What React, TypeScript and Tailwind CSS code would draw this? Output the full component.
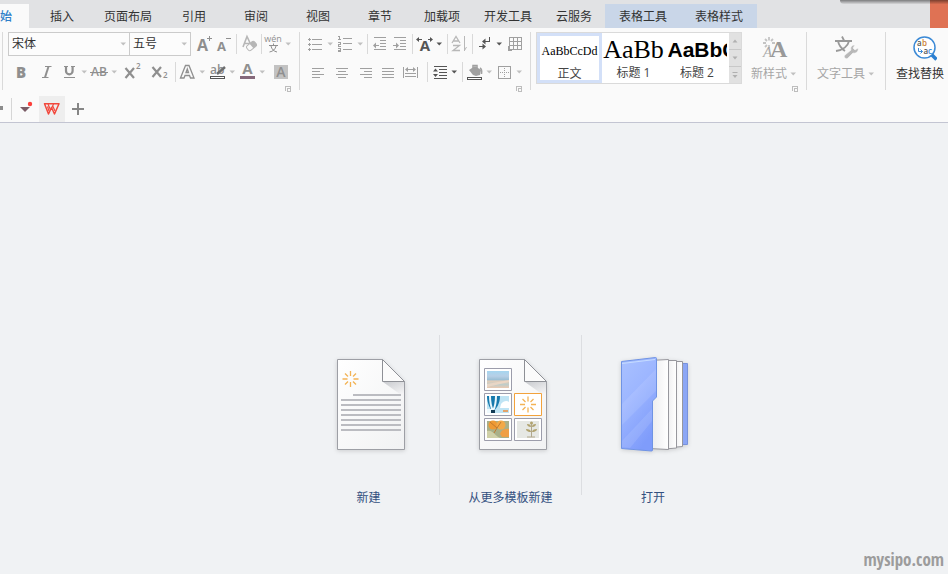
import { useState } from "react";
import type { ReactNode } from "react";

const tabs = ["插入", "页面布局", "引用", "审阅", "视图", "章节", "加载项", "开发工具", "云服务"];
const contextTabs = ["表格工具", "表格样式"];

/* ---------- small ribbon parts ---------- */

function Svg({ w = 22, h = 20, children }: { w?: number; h?: number; children: ReactNode }) {
  return (
    <svg
      width={w}
      height={h}
      viewBox={`0 0 ${w} ${h}`}
      fill="none"
      stroke="currentColor"
      className="shrink-0 overflow-visible"
      aria-hidden="true"
    >
      {children}
    </svg>
  );
}

function Tool({ label, className = "w-[22px]", children }: { label: string; className?: string; children: ReactNode }) {
  return (
    <button aria-label={label} className={`flex h-6 shrink-0 items-center justify-center ${className}`}>
      {children}
    </button>
  );
}

function Caret({ className = "text-[#c0c0c0]" }: { className?: string }) {
  return (
    <svg width="8" height="4" viewBox="0 0 8 4" className={`shrink-0 ${className}`} aria-hidden="true">
      <path d="M1.500 0.500h5.500L4.250 3.500z" fill="currentColor" />
    </svg>
  );
}

function Sep({ className = "" }: { className?: string }) {
  return <span className={`h-5 w-px shrink-0 bg-[#d9d9d9] ${className}`} />;
}

function Launcher() {
  return (
    <button aria-label="更多设置" className="mt-0.5 mr-2 self-end text-[#bdbdbd]">
      <svg width="6" height="6" viewBox="0 0 6 6" fill="none" stroke="currentColor" shapeRendering="crispEdges">
        <path d="M.5 5V.5H5.500M5.500 .5V2M2.500 2.500h3v3h-3z" />
      </svg>
    </button>
  );
}

function Picker({ label, options, className }: { label: string; options: string[]; className: string }) {
  return (
    <label className={`grid h-6 shrink-0 items-center border border-[#cbcbcb] bg-[#fcfcfc] ${className}`}>
      <select
        aria-label={label}
        className="col-start-1 row-start-1 h-[22px] w-full appearance-none bg-transparent pl-[3px] text-[12px] leading-[22px] text-[#333] outline-none"
      >
        {options.map((o) => (
          <option key={o}>{o}</option>
        ))}
      </select>
      <span className="pointer-events-none col-start-1 row-start-1 mr-0.5 justify-self-end">
        <Caret />
      </span>
    </label>
  );
}

/* ---------- ribbon groups ---------- */

function FontGroup() {
  return (
    <div className="ml-0.5 flex h-[58px] w-[297px] shrink-0 flex-col border-l border-[#dadada] pl-[5px] text-[#8f8f8f]">
      <div className="flex items-center">
        <Picker label="字体" options={["宋体", "黑体", "楷体"]} className="w-[122px]" />
        <Picker label="字号" options={["五号", "四号", "三号"]} className="-ml-px w-[62px]" />
        <Tool label="增大字号" className="w-6">
          <Svg w={24}>
            <text x="6" y="17" fontSize="16" fontWeight="700" fill="currentColor" stroke="none">A</text>
            <path d="M16 4.500h5M18.500 2v5" />
          </Svg>
        </Tool>
        <Tool label="减小字号" className="w-5">
          <Svg w={20}>
            <text x="2" y="17" fontSize="13" fontWeight="700" fill="currentColor" stroke="none">A</text>
            <path d="M11 4.500h5" />
          </Svg>
        </Tool>
        <Sep className="ml-px" />
        <Tool label="清除格式" className="w-6 text-[#b6b6b6]">
          <Svg w={24}>
            <path d="M6 13L10 2.500L14 11M7.500 9.500h5" strokeWidth="1.600" />
            <g transform="rotate(-40 14.500 12)">
              <rect x="9.500" y="9" width="10" height="6" rx="2" fill="#fafafa" />
              <path d="M14.500 9h3a2 2 0 0 1 2 2v2a2 2 0 0 1-2 2h-3z" fill="currentColor" stroke="none" />
            </g>
          </Svg>
        </Tool>
        <Sep />
        <Tool label="拼音指南">
          <Svg w={22}>
            <text x="11" y="8" textAnchor="middle" fontSize="9" fill="currentColor" stroke="none">wén</text>
            <path d="M7 11.500h9M11.500 9.500v2M9 12c.5 3 3 5.500 6 6M14 12c-.5 3-3 5.500-6.500 6" />
          </Svg>
        </Tool>
        <Caret />
      </div>

      <div className="mt-1 flex items-center">
        <Tool label="加粗" className="w-[26px]">
          <span className="text-[15px] leading-5 font-extrabold">B</span>
        </Tool>
        <Tool label="倾斜" className="w-[26px]">
          <Svg w={22}>
            <path d="M9 4.500h6.500M6 15.500h6.500" />
            <path d="M12.500 4.500l-3.500 11" strokeWidth="2" />
          </Svg>
        </Tool>
        <Tool label="下划线" className="w-5">
          <Svg w={20}>
            <path d="M6 4v5a3.300 3.300 0 0 0 6.600 0V4" strokeWidth="2.200" />
            <path d="M4 4.500h4M11 4.500h4M4 15.500h11" />
          </Svg>
        </Tool>
        <Caret />
        <Tool label="删除线">
          <Svg w={22}>
            <text x="11" y="14" textAnchor="middle" fontSize="12" fontWeight="600" fill="currentColor" stroke="none">AB</text>
            <path d="M2 10.500h18" />
          </Svg>
        </Tool>
        <Caret />
        <Tool label="上标" className="w-7">
          <Svg w={28}>
            <path d="M7.500 6l8.500 10M16 6L7.500 16" strokeWidth="2.200" />
            <text x="18" y="7" fontSize="8" fontWeight="600" fill="currentColor" stroke="none">2</text>
          </Svg>
        </Tool>
        <Tool label="下标" className="w-7">
          <Svg w={28}>
            <path d="M6.500 5l8.500 10M15 5L6.500 15" strokeWidth="2.200" />
            <text x="17" y="16" fontSize="8" fontWeight="600" fill="currentColor" stroke="none">2</text>
          </Svg>
        </Tool>
        <Sep className="ml-px" />
        <Tool label="文字效果">
          <Svg w={22}>
            <path d="M4.500 16L9.500 3.500h3.500L18 16h-3.500l-1-2.500h-4.500l-1 2.500zM10 10.500h2.500l-1.200-3.500z" strokeWidth="1.300" />
          </Svg>
        </Tool>
        <Caret />
        <Tool label="突出显示">
          <Svg w={22}>
            <text x="4" y="12" fontSize="12" fontWeight="600" fill="currentColor" stroke="none">ab</text>
            <path d="M11 12L19 5" stroke="#6e6e6e" strokeWidth="2.500" />
            <path d="M4.500 14.500h14v2h-14z" stroke="#555" fill="#fff" shapeRendering="crispEdges" />
          </Svg>
        </Tool>
        <Caret />
        <Tool label="字体颜色">
          <Svg w={22}>
            <text x="11.500" y="12" textAnchor="middle" fontSize="15" fontWeight="700" fill="currentColor" stroke="none">A</text>
            <path d="M4 14h15v3H4z" fill="#85697b" stroke="none" />
          </Svg>
        </Tool>
        <Caret />
        <Tool label="字符底纹" className="w-7">
          <Svg w={28}>
            <path d="M8 3h14v14H8z" fill="#c2c2c2" stroke="none" />
            <text x="15" y="15" textAnchor="middle" fontSize="14" fontWeight="600" fill="currentColor" stroke="none">A</text>
          </Svg>
        </Tool>
      </div>
      <Launcher />
    </div>
  );
}

function ParagraphGroup() {
  return (
    <div className="flex h-[58px] w-[231px] shrink-0 flex-col border-l border-[#dadada] text-[#a0a0a0]">
      <div className="flex items-center pl-1">
        <Tool label="项目符号">
          <Svg w={22}>
            <path d="M8 5.500h10M8 10.500h10M8 15.500h10M4 5.500h3M4 10.500h3M4 15.500h3M5.500 4v3M5.500 9v3M5.500 14v3" shapeRendering="crispEdges" />
          </Svg>
        </Tool>
        <Caret />
        <Tool label="编号">
          <Svg w={22}>
            <path d="M9 4.500h9M9 9.500h9M9 15.500h9" shapeRendering="crispEdges" />
            <path d="M5.500 2v4M4 2.500h1.500M4 5.500h3M4 8.500h2.500v2h-2v2h2.500M4 14.500h2.500v3H4M4 16.500h2.500" shapeRendering="crispEdges" />
          </Svg>
        </Tool>
        <Caret />
        <Sep className="ml-[3px]" />
        <Tool label="减少缩进" className="ml-0.5 w-5">
          <Svg w={20}>
            <path d="M4 3.500h12M4 15.500h12M10 6.500h6M10 9.500h6M10 12.500h6M4 11.500h5" shapeRendering="crispEdges" />
            <path d="M3 11.500l3-3v6z" fill="currentColor" stroke="none" />
          </Svg>
        </Tool>
        <Tool label="增加缩进" className="w-5">
          <Svg w={20}>
            <path d="M4 3.500h12M4 15.500h12M10 6.500h6M10 9.500h6M10 12.500h6M3 11.500h5" shapeRendering="crispEdges" />
            <path d="M9 11.500l-3-3v6z" fill="currentColor" stroke="none" />
          </Svg>
        </Tool>
        <Sep className="ml-0.5" />
        <Tool label="中文版式" className="w-[22px] text-[#555]">
          <Svg w={22}>
            <text x="12" y="17" textAnchor="middle" fontSize="15" fontWeight="700" fill="currentColor" stroke="none">A</text>
            <path d="M4 5.500h5M15 5.500h4" />
            <path d="M3 5.500l3-2.500v5zM20 5.500l-3-2.500v5z" fill="currentColor" stroke="none" />
          </Svg>
        </Tool>
        <Caret className="text-[#555]" />
        <Sep className="ml-1" />
        <Tool label="排序" className="w-6 text-[#b8b8b8]">
          <Svg w={24}>
            <path d="M4 9L8 2.500L12 9M5.500 7h5M5 11.500h6.500l-6.500 5h7" strokeWidth="1.300" />
            <path d="M16.500 2v15M18.500 13l-2 3.500" />
          </Svg>
        </Tool>
        <Sep />
        <Tool label="显示编辑标记" className="w-[22px] text-[#555]">
          <Svg w={22}>
            <path d="M16.500 3v4.500H11M6 12.500h6" shapeRendering="crispEdges" />
            <path d="M9 7.500l3.500-3v6zM13 12.500l-3.500-3v6z" fill="currentColor" stroke="none" />
          </Svg>
        </Tool>
        <Caret className="text-[#555]" />
        <Tool label="插入表格" className="w-6">
          <Svg w={24}>
            <path d="M6.500 3.500h12v12h-12zM6.500 7.500h12M6.500 11.500h12M10.500 3.500v12M14.500 3.500v12M5.500 12v4.500h3" shapeRendering="crispEdges" />
          </Svg>
        </Tool>
      </div>

      <div className="mt-1 flex items-center pl-1.5">
        <Tool label="左对齐" className="w-6">
          <Svg w={24}><path d="M6 6.500h12M6 9.500h8M6 12.500h12M6 15.500h8" shapeRendering="crispEdges" /></Svg>
        </Tool>
        <Tool label="居中" className="w-6">
          <Svg w={24}><path d="M6 6.500h12M8 9.500h8M6 12.500h12M8 15.500h8" shapeRendering="crispEdges" /></Svg>
        </Tool>
        <Tool label="右对齐" className="w-6">
          <Svg w={24}><path d="M6 6.500h12M10 9.500h8M6 12.500h12M10 15.500h8" shapeRendering="crispEdges" /></Svg>
        </Tool>
        <Tool label="两端对齐" className="w-5">
          <Svg w={20}><path d="M4 6.500h12M4 9.500h12M4 12.500h12M4 15.500h12" shapeRendering="crispEdges" /></Svg>
        </Tool>
        <Tool label="分散对齐" className="w-6">
          <Svg w={24}>
            <path d="M5.500 5v11M19.500 5v11M7 11.500h11M7 14.500h11M8 7.500h9" shapeRendering="crispEdges" />
            <path d="M7 7.500l3-2.500v5zM18 7.500l-3-2.500v5z" fill="currentColor" stroke="none" />
          </Svg>
        </Tool>
        <Sep className="ml-[5px]" />
        <Tool label="行距" className="w-[22px] text-[#555]">
          <Svg w={22}>
            <path d="M6 4.500h13M11 7.500h8M11 10.500h8M11 13.500h8M6 16.500h13" shapeRendering="crispEdges" />
            <path d="M5 9.500l2.500-3 2.500 3zM5 12l2.500 3 2.500-3z" fill="currentColor" stroke="none" />
          </Svg>
        </Tool>
        <Caret className="text-[#555]" />
        <Sep className="ml-1" />
        <Tool label="底纹颜色">
          <Svg w={22}>
            <path d="M6 8l6-4 6 4-1 5-4 1-3-1z" fill="currentColor" stroke="none" />
            <path d="M10 6V3.500h4V6M17 6c2 1 2 3 1.500 6" strokeWidth="1.500" />
            <path d="M4.500 15.500h14v2h-14z" stroke="#555" fill="#fff" shapeRendering="crispEdges" />
          </Svg>
        </Tool>
        <Caret />
        <Tool label="边框">
          <Svg w={22}>
            <path d="M5.500 4.500h12v12h-12z" shapeRendering="crispEdges" />
            <path d="M11.500 6v10M7 10.500h10" strokeDasharray="1 1" shapeRendering="crispEdges" />
          </Svg>
        </Tool>
        <Caret />
      </div>
      <Launcher />
    </div>
  );
}

function StyleGroup() {
  return (
    <div className="flex h-[58px] w-[276px] shrink-0 border-l border-[#dadada] pl-[5px]">
      <div className="flex h-[52px] w-[206px] shrink-0 border border-[#dadada] bg-white text-[12px] text-[#444]">
        <button className="flex w-[65px] flex-col items-center overflow-hidden border-[3px] border-[#d3e0f8]">
          <span className="font-['Liberation_Serif',serif] text-[12px] leading-[30px] text-black">AaBbCcDd</span>
          <span className="leading-4">正文</span>
        </button>
        <button className="flex w-[63px] flex-col items-center overflow-hidden">
          <span className="font-['Liberation_Serif',serif] text-[26px] leading-[34px] text-black">AaBb</span>
          <span className="-mt-0.5 leading-4">标题 1</span>
        </button>
        <button className="flex w-16 flex-col items-center">
          <span className="w-[59px] overflow-hidden text-left font-['Liberation_Sans',sans-serif] text-[21px] leading-[34px] font-bold text-black">
            AaBbCc
          </span>
          <span className="-mt-0.5 leading-4">标题 2</span>
        </button>
        <div className="flex flex-1 flex-col divide-y divide-[#c8c8c8] bg-[#e1e1e1] text-[#b0b0b0]">
          <button aria-label="上一行" className="flex flex-1 items-center justify-center">
            <svg width="6" height="4" viewBox="0 0 6 4"><path d="M.5 3.500h5L3 .5z" fill="currentColor" /></svg>
          </button>
          <button aria-label="下一行" className="flex flex-1 items-center justify-center">
            <svg width="6" height="4" viewBox="0 0 6 4"><path d="M.5 .5h5L3 3.500z" fill="currentColor" /></svg>
          </button>
          <button aria-label="展开样式" className="flex flex-1 items-center justify-center">
            <svg width="6" height="7" viewBox="0 0 6 7"><path d="M.5 0h5v1h-5zM.5 3h5L3 6z" fill="currentColor" /></svg>
          </button>
        </div>
      </div>
      <div className="flex flex-1 flex-col">
        <button className="flex h-[52px] flex-col items-center text-[12px] text-[#a6a6a6]">
          <svg width="28" height="28" viewBox="0 0 28 28" fill="none" className="mt-1" aria-hidden="true">
            <g stroke="#c4c4c4" strokeWidth="1.800">
              <path d="M9 1v3.500M9 9v3M3 7h3M12 7h3M5 3l2 2M13 3l-2 2M5 11l2-2" />
            </g>
            <text x="3" y="21" fontFamily="Liberation Serif" fontStyle="italic" fontSize="15" fill="#a8a8a8">A</text>
            <text x="10" y="21" fontFamily="Liberation Serif" fontWeight="700" fontSize="24" fill="#999">A</text>
          </svg>
          <span className="flex items-center gap-0.5 leading-5">
            新样式
            <Caret />
          </span>
        </button>
        <Launcher />
      </div>
    </div>
  );
}

function TextToolGroup() {
  return (
    <div className="flex h-[58px] w-[79px] shrink-0 justify-center border-l border-[#dadada]">
      <button className="flex h-[52px] flex-col items-center text-[12px] text-[#a6a6a6]">
        <svg width="28" height="28" viewBox="0 0 28 28" fill="none" className="mt-1" aria-hidden="true">
          <path d="M3 5h17M10 .5l2 4M6 5c1 5 4 8 7 10M17 5c-1 5-6 9-13 10" stroke="#999" strokeWidth="1.800" />
          <path
            d="M13 19l6-5c-1-3 1-5 4-5l-2 3 2 2 3-2c1 3-2 6-5 5l-5 5c-1 1-2 1-3 0s-1-2 0-3z"
            fill="#b8b8b8"
            stroke="#fafafa"
            strokeWidth=".6"
          />
        </svg>
        <span className="flex items-center gap-0.5 leading-5">
          文字工具
          <Caret />
        </span>
      </button>
    </div>
  );
}

function FindGroup() {
  return (
    <div className="flex h-[58px] flex-1 overflow-hidden border-l border-[#dadada] pl-2.5">
      <button className="flex h-[52px] shrink-0 flex-col items-center text-[12px] text-[#333]">
        <svg width="24" height="28" viewBox="0 0 24 28" fill="none" className="ml-2.5 mt-1" aria-hidden="true">
          <circle cx="11.500" cy="11.500" r="10.500" fill="#fff" stroke="#3c8ad6" strokeWidth="1.500" />
          <path d="M19 19l4.500 4.500" stroke="#2b7fd0" strokeWidth="3.500" />
          <text x="4" y="10" fontSize="8" fontWeight="600" fill="#555">a</text>
          <text x="9" y="10" fontSize="8" fontWeight="600" fill="#cc8136">b</text>
          <path d="M5.500 12v3.500h4M7.500 13.500l2 2-2 2" stroke="#3c8ad6" />
          <text x="10.500" y="18" fontSize="8" fontWeight="600" fill="#555">a</text>
          <text x="15" y="18" fontSize="8" fontWeight="600" fill="#3c8ad6">c</text>
        </svg>
        <span className="leading-5">查找替换</span>
      </button>
    </div>
  );
}

/* ---------- start page drawings ---------- */

function Burst({ x, y }: { x: number; y: number }) {
  return (
    <g transform={`translate(${x} ${y})`} stroke="#f3b355" strokeWidth="1.300">
      <path d="M0-8v5M0 3v5M-8 0h5M3 0h5M-5.500-5.500l3 3M5.500-5.500l-3 3M-5.500 5.500l3-3M5.500 5.500l-3-3" />
    </g>
  );
}

function Sheet({ id, children }: { id: string; children: ReactNode }) {
  return (
    <svg width="72" height="98" viewBox="0 0 72 98" fill="none" className="overflow-visible drop-shadow-sm" aria-hidden="true">
      <defs>
        <linearGradient id={`${id}-page`} x1="0" y1="0" x2="1" y2="1">
          <stop offset="0" stopColor="#fff" />
          <stop offset="1" stopColor="#f1f2f3" />
        </linearGradient>
        <linearGradient id={`${id}-fold`} x1="0" y1="0" x2=".6" y2="1">
          <stop offset="0" stopColor="#c9cbcf" />
          <stop offset="1" stopColor="#f5f5f6" />
        </linearGradient>
      </defs>
      <path d="M4.500 2.500h45l22 22v68h-67z" fill={`url(#${id}-page)`} stroke="#9d9fa5" />
      <path d="M50 25h21v15z" fill={`url(#${id}-fold)`} />
      <path d="M49.500 2.500v22h22z" fill="#fbfbfb" stroke="#8e9096" />
      {children}
    </svg>
  );
}

function BlankSheet() {
  return (
    <Sheet id="blank">
      <Burst x={17.5} y={22} />
      <path
        d="M20 38h48M8 43h60M8 48h60M8 53h60M8 58h60M8 63h60M8 68h60M8 73h60"
        stroke="#bbbcc1"
        strokeWidth="2"
        shapeRendering="crispEdges"
      />
    </Sheet>
  );
}

function TemplateSheet() {
  return (
    <Sheet id="template">
      <defs>
        <linearGradient id="beach" x1="0" y1="0" x2="0" y2="1">
          <stop offset="0" stopColor="#a5d6f0" />
          <stop offset=".3" stopColor="#b7cfe6" />
          <stop offset=".5" stopColor="#9cc0d6" />
          <stop offset=".6" stopColor="#e2cdb9" />
          <stop offset=".8" stopColor="#bfcdca" />
          <stop offset="1" stopColor="#ecc9b0" />
        </linearGradient>
      </defs>
      <g fill="#fff" stroke="#9c9dab">
        <path d="M9.500 11.500h27v22h-27zM9.500 36.500h27v22h-27zM9.500 61.500h27v22h-27zM39.500 61.500h27v22h-27z" />
        <path d="M39.500 36.500h27v22h-27z" stroke="#f2a23c" />
      </g>
      <path d="M12 14h22v17H12z" fill="url(#beach)" />
      <path d="M12 27l22-4v2l-22 5z" fill="#f0d8c6" opacity=".8" />
      <path d="M12 39h22v17H12z" fill="#bfe4f4" />
      <path d="M12 39h13c0 7-3 12-7 16-3-3-6-9-6-16z" fill="#1579ad" />
      <path d="M15 39c0 6 1 11 3 15M21 39c0 6-1 11-3 15" stroke="#e9f7fc" strokeWidth="2" />
      <path d="M26 47c2-3 6-4 8-2v6h-9z" fill="#fff" />
      <path d="M12 52h5v4h-5z" fill="#eef9fd" />
      <path d="M16 53h4v3h-4z" fill="#123c55" />
      <path d="M28 53h5v2h-5z" fill="#e2a36a" />
      <Burst x={53} y={47.5} />
      <path d="M12 64h22v17H12z" fill="#a9b089" />
      <path d="M12 74c6-2 8 6 14 7H12z" fill="#cfd0a8" />
      <circle cx="18" cy="68" r="4.500" fill="#ee9a35" />
      <circle cx="26" cy="68" r="4.500" fill="#f2a948" />
      <path d="M25 77c1-4 5-6 9-5v8h-7z" fill="#ef9f45" />
      <path d="M15 65l7 6 4-6M22 71l-3 5" stroke="#c27a2e" />
      <path d="M42 64h22v17H42z" fill="#e6e8e4" />
      <path d="M56.500 66v14M52 80h8" stroke="#b1a88c" />
      <path
        d="M56 70c-3 0-4-2-4-3 3 0 4 1 4 3zM57 70c3 0 4-2 4-3-3 0-4 1-4 3zM56 75c-4 0-5-2-5-3 3 0 5 1 5 3zM57 75c4 0 5-2 5-3-3 0-5 1-5 3z"
        fill="#b1a370"
      />
      <circle cx="56.5" cy="66" r="1.500" fill="#b1a370" />
    </Sheet>
  );
}

function Folder() {
  return (
    <svg width="72" height="98" viewBox="0 0 72 98" fill="none" className="overflow-visible drop-shadow-sm" aria-hidden="true">
      <defs>
        <linearGradient id="folder" x1="0" y1="0" x2=".5" y2="1">
          <stop offset="0" stopColor="#a9c1ff" />
          <stop offset=".45" stopColor="#9db6ff" />
          <stop offset="1" stopColor="#7f9cfb" />
        </linearGradient>
        <linearGradient id="leaf" x1="0" y1="0" x2="1" y2="0">
          <stop offset="0" stopColor="#e9e9eb" />
          <stop offset="1" stopColor="#fff" />
        </linearGradient>
      </defs>
      <path d="M65 6.500h5.500v81H65z" fill="#8ba6f5" stroke="#7892dc" />
      <g fill="url(#leaf)" stroke="#97979d">
        <path d="M54 4.500h11.500v85L54 90.500z" />
        <path d="M48 3.500h11.500V91L48 92z" />
        <path d="M32 3.500L51.500 2.500v90L32 91.500z" />
      </g>
      <path d="M4.500 4.500L38.500.5c.6 0 1 .3 1 1V40l-4 4v49c0 .8-.4 1-1 1L4.500 91.500z" fill="url(#folder)" stroke="#6f93e4" />
      <path d="M5 47L39 12v22L5 68zM5 84l30-32v12L13 91l-8-1z" fill="#fff" opacity=".1" />
      <path d="M5 6.500l33-4" stroke="#c6dcff" />
    </svg>
  );
}

const entries = [
  { label: "新建", art: <BlankSheet /> },
  { label: "从更多模板新建", art: <TemplateSheet /> },
  { label: "打开", art: <Folder /> },
];

export default function App() {
  const [active, setActive] = useState("始");

  return (
    <div className="flex min-h-screen flex-col overflow-hidden bg-[#f0f2f4] font-['Open_Sans','Noto_Sans_CJK_SC',sans-serif] text-[12px]">
      {/* Tab strip */}
      <header className="relative flex h-7 items-end bg-[#e1e2e4] text-[#333]">
        <nav className="flex h-6 shrink-0 font-['Noto_Sans_CJK_SC',sans-serif]">
          <button
            onClick={() => setActive("始")}
            className="mr-0.5 w-[29px] bg-[#fafafa] text-left font-medium leading-6 text-[#2f7fc9]"
          >
            始
          </button>
          {tabs.map((tab) => (
            <button
              key={tab}
              onClick={() => setActive(tab)}
              aria-pressed={active === tab}
              className="min-w-[62px] px-[11px] leading-6"
            >
              {tab}
            </button>
          ))}
          <div className="flex bg-[#c9d6e8]">
            {contextTabs.map((tab) => (
              <button key={tab} onClick={() => setActive(tab)} className="px-3.5 leading-6">
                {tab}
              </button>
            ))}
          </div>
        </nav>
        <div className="ml-auto h-7 w-[18px] bg-[#df7254]" />
        <div className="absolute top-0 right-0 h-1 w-[108px] rounded-bl bg-linear-to-b from-black/45 to-black/5" />
      </header>

      {/* Ribbon */}
      <section className="flex h-16 bg-[#fafafa] pt-1">
        <FontGroup />
        <ParagraphGroup />
        <StyleGroup />
        <TextToolGroup />
        <FindGroup />
      </section>

      {/* Document tabs */}
      <section className="flex h-[31px] items-end border-b border-[#c3c5d2] bg-[#fafafa]">
        <span className="mb-3 h-1 w-[3px] bg-[#8c8c8c]" />
        <span className="mb-0.5 ml-2 h-[22px] w-px bg-[#d6d6d6]" />
        <button aria-label="文档列表" className="ml-2">
          <svg width="19" height="26" viewBox="0 0 19 26" aria-hidden="true">
            <path d="M0 11h10l-5 5z" fill="#7a5c66" />
            <circle cx="10" cy="8" r="2.200" fill="#fc3f3a" />
          </svg>
        </button>
        <button aria-label="首页" className="flex h-[26px] w-[26px] items-center justify-center bg-[#eeeeee]">
          <svg width="18" height="14" viewBox="0 0 18 14" fill="none" stroke="#f2483c" strokeWidth="1.500" aria-hidden="true">
            <path d="M1.500 1.700H16L11.500 12L8.500 5.500L5.500 12z" strokeLinejoin="round" />
            <path d="M5 2l2.500 6M9 5.500L10.500 2M9.500 3.500L12 9M4.500 4.500L6 9" strokeWidth="1.200" />
          </svg>
        </button>
        <button aria-label="新建标签" className="mb-[7px] ml-[7px]">
          <svg width="12" height="12" viewBox="0 0 12 12" stroke="#868686" strokeWidth="2" aria-hidden="true">
            <path d="M0 6h12M6 0v12" />
          </svg>
        </button>
      </section>

      {/* Start page */}
      <main className="flex flex-1 flex-col pt-[212px]">
        <div className="flex justify-center divide-x divide-[#dcdee1] pl-[74px]">
          {entries.map((entry) => (
            <div key={entry.label} className="h-40 w-[142px]">
              <button className="flex w-full flex-col items-center pt-[22px]">
                {entry.art}
                <span className="mt-[34px] font-['Noto_Sans_CJK_SC',sans-serif] leading-4 text-[#33507f]">{entry.label}</span>
              </button>
            </div>
          ))}
        </div>
        <p className="mt-auto mr-1 mb-1 self-end font-['Open_Sans_Condensed','Roboto_Condensed','DejaVu_Sans_Condensed',sans-serif] text-[17px] leading-5 font-bold text-[#9c9c9c]">
          mysipo.com
        </p>
      </main>
    </div>
  );
}
